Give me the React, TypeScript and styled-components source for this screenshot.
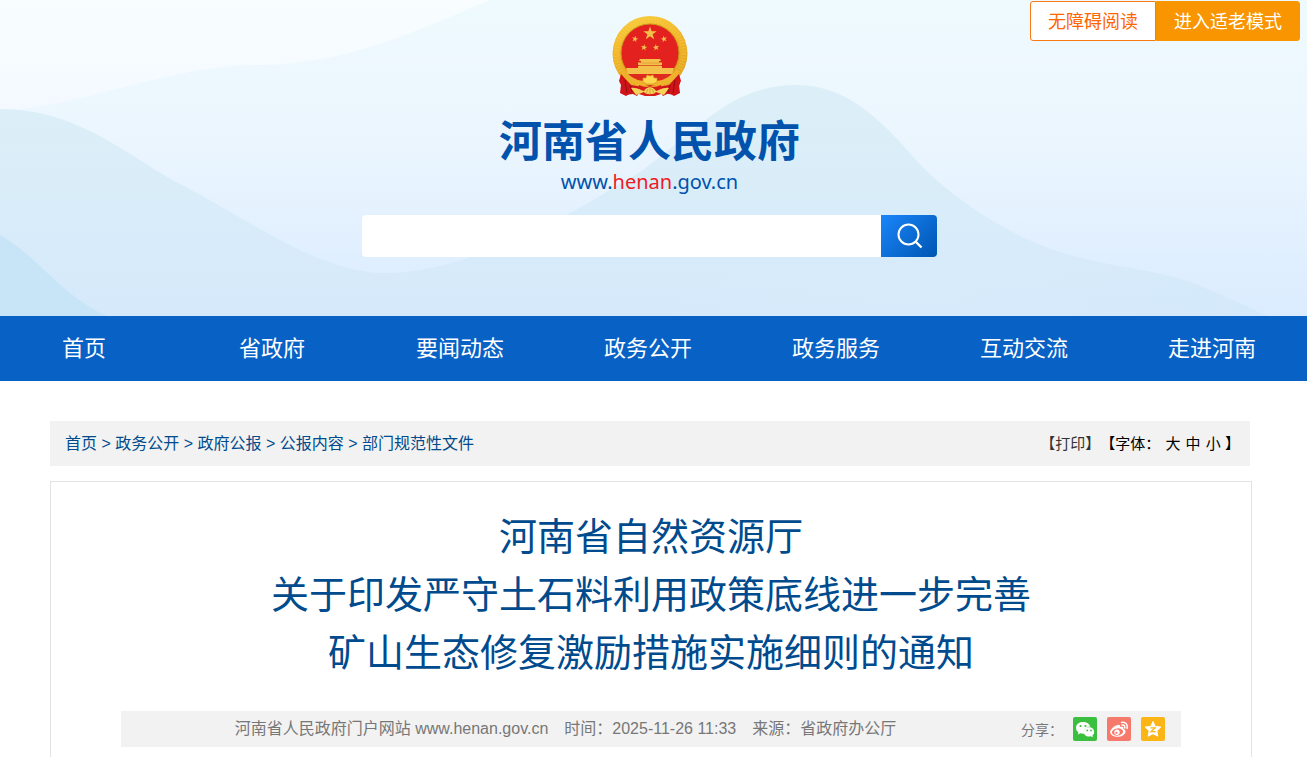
import React from "react";
import styled, { createGlobalStyle } from "styled-components";

const GlobalStyle = createGlobalStyle`
  * { box-sizing: border-box; }
  body {
    margin: 0;
    background: #fff;
    font-family: "Liberation Sans", "Noto Sans CJK SC", sans-serif;
    text-spacing-trim: space-all;
  }
  a { color: inherit; text-decoration: none; }
  button, input { font: inherit; border: 0; margin: 0; }
`;

const Page = styled.div`
  display: flex;
  flex-direction: column;
  min-height: 100vh;
`;

const Header = styled.header`
  position: relative;
  padding: 15px 8px 59px 0;
  display: flex;
  flex-direction: column;
  align-items: center;
  overflow: hidden;
  background: #f8fdff;
`;

const Waves = styled.svg`
  position: absolute;
  inset: 0;
  width: 100%;
  height: 100%;
`;

const TopTools = styled.div`
  position: absolute;
  top: 1px;
  right: 7px;
  display: flex;
`;

const ToolButton = styled.button<{ $solid?: boolean }>`
  height: 40px;
  width: ${(p) => (p.$solid ? 144 : 126)}px;
  padding: 0 0 2px;
  font-size: 18px;
  cursor: pointer;
  color: ${(p) => (p.$solid ? "#fff" : "#f60")};
  background: ${(p) => (p.$solid ? "#f99500" : "#fff")};
  border: 1px solid ${(p) => (p.$solid ? "#f99500" : "#f97a14")};
  border-radius: ${(p) => (p.$solid ? "0 3px 3px 0" : "3px 0 0 3px")};
`;

const Brand = styled.a`
  position: relative;
  display: flex;
  flex-direction: column;
  align-items: center;
`;

const SiteName = styled.span`
  margin-top: 9px;
  font-family: "Noto Sans CJK SC", sans-serif;
  font-size: 43px;
  font-weight: 700;
  line-height: 60px;
  color: #0052ad;
`;

const SiteUrl = styled.span`
  font-family: "Noto Sans", sans-serif;
  font-size: 20px;
  line-height: 28px;
  color: #0052ad;
  em { font-style: normal; color: #ee1b22; }
`;

const SearchForm = styled.form`
  position: relative;
  display: flex;
  width: 575px;
  max-width: 100%;
  height: 42px;
  margin-top: 19px;
`;

const SearchInput = styled.input`
  flex: 1;
  min-width: 0;
  padding: 0 15px;
  font-size: 16px;
  background: #fff;
  border-radius: 4px 0 0 4px;
`;

const SearchButton = styled.button`
  display: flex;
  align-items: center;
  justify-content: center;
  width: 56px;
  padding: 0;
  cursor: pointer;
  background: linear-gradient(135deg, #1a86fa, #0055b2);
  border-radius: 0 4px 4px 0;
`;

const NavBar = styled.nav`
  background: #0861c5;
  overflow: hidden;
`;

const NavList = styled.ul`
  display: grid;
  grid-template-columns: repeat(7, 1fr);
  margin: 0 1px 0 -10px;
  padding: 0;
  list-style: none;
`;

const NavItem = styled.li`
  text-align: center;
  font-size: 22px;
  line-height: 65px;
  color: #fff;
`;

const Main = styled.main`
  flex: 1;
  display: flex;
  padding: 40px 7px 0 0;
`;

const Container = styled.div`
  flex: 1;
  display: flex;
  flex-direction: column;
  max-width: 1200px;
  margin: 0 auto;
`;

const CrumbBar = styled.div`
  display: flex;
  justify-content: space-between;
  align-items: center;
  height: 45px;
  padding: 0 10px 0 15px;
  background: #f2f2f2;
`;

const Crumbs = styled.nav`
  font-size: 16px;
  line-height: 24px;
  color: #004b8d;
`;

const PageTools = styled.div`
  font-size: 15px;
  line-height: 24px;
  color: #000;
`;

const PrintLink = styled.a`
  color: #333;
`;

const SizeLink = styled.a`
  margin-left: 1px;
`;

const Article = styled.article`
  box-sizing: content-box;
  flex: 1;
  width: 100%;
  margin-top: 15px;
  padding-top: 26px;
  border: solid #e3e3e3;
  border-width: 1px 1px 0;
`;

const Title = styled.h1`
  margin: 0;
  text-align: center;
  font-size: 38px;
  font-weight: 400;
  line-height: 58px;
  color: #004b8d;
`;

const MetaBar = styled.div`
  display: flex;
  align-items: center;
  min-height: 36px;
  margin: 29px 70px 10px;
  background: #f2f2f2;
  color: #777;
`;

const Meta = styled.div`
  flex: 1;
  display: flex;
  justify-content: center;
  gap: 16px;
  font-size: 16px;
  line-height: 24px;
`;

const Share = styled.div`
  display: flex;
  align-items: center;
  gap: 10px;
  padding: 0 16px 0 11px;
  font-size: 14px;
`;

const ShareButton = styled.button<{ $color: string }>`
  display: flex;
  width: 24px;
  height: 24px;
  padding: 0;
  cursor: pointer;
  background: ${(p) => p.$color};
  border-radius: 2px;
`;

const NAV = ["首页", "省政府", "要闻动态", "政务公开", "政务服务", "互动交流", "走进河南"];
const CRUMBS = ["首页", "政务公开", "政府公报", "公报内容", "部门规范性文件"];
const SIZES = ["大", "中", "小"];
const TITLE = [
  "河南省自然资源厅",
  "关于印发严守土石料利用政策底线进一步完善",
  "矿山生态修复激励措施实施细则的通知",
];

const star = (cx: number, cy: number, r: number, turn = 0) =>
  Array.from({ length: 10 }, (_, i) => {
    const a = ((i * 36 - 90 + turn) * Math.PI) / 180;
    const d = i % 2 ? r * 0.4 : r;
    return `${(cx + d * Math.cos(a)).toFixed(2)},${(cy + d * Math.sin(a)).toFixed(2)}`;
  }).join(" ");

const Background = () => (
  <Waves viewBox="0 0 1307 316" preserveAspectRatio="none" aria-hidden="true">
    <defs>
      <linearGradient id="sky" x1="0" y1="0" x2="0" y2="1">
        <stop offset="0" stopColor="#f8feff" />
        <stop offset="0.34" stopColor="#f3f9ff" />
      </linearGradient>
      <linearGradient id="far" x1="0" y1="0" x2="0" y2="1">
        <stop offset="0" stopColor="#effafe" />
        <stop offset="0.4" stopColor="#ecf6fe" />
        <stop offset="1" stopColor="#dbecff" />
      </linearGradient>
      <linearGradient id="mid" x1="0" y1="0.1" x2="0" y2="1">
        <stop offset="0" stopColor="#dceff8" />
        <stop offset="0.5" stopColor="#d8ecf9" />
        <stop offset="1" stopColor="#d5e9fb" />
      </linearGradient>
      <linearGradient id="fade" x1="0" y1="0" x2="1" y2="0">
        <stop offset="0" stopColor="#dff0fd" stopOpacity="0" />
        <stop offset="1" stopColor="#d2e8f9" />
      </linearGradient>
    </defs>
    <rect width="1307" height="316" fill="url(#sky)" />
    <path d="M0 112C100 102 170 65 260 65C340 65 400 38 490 0H1307V316H0Z" fill="url(#far)" />
    <path
      d="M0 109C80 109 130 158 180 184C260 226 320 273 385 273C470 273 570 215 640 172C700 129 730 85 797 85C850 85 885 125 915 159C950 198 1010 236 1060 252C1110 268 1160 269 1200 286C1230 298 1250 308 1268 316H0Z"
      fill="url(#mid)"
    />
    <path d="M640 316C760 250 850 260 960 273C1050 284 1120 255 1200 286C1230 298 1250 308 1268 316Z" fill="url(#fade)" opacity="0.5" />
    <path d="M0 235C40 258 60 295 107 316H0Z" fill="#c8e5f8" />
  </Waves>
);

const Emblem = () => (
  <svg width="78" height="84" viewBox="0 0 78 84" aria-hidden="true">
    <defs>
      <linearGradient id="gold" x1="0" y1="0" x2="0.3" y2="1">
        <stop offset="0" stopColor="#f9cf3c" />
        <stop offset="0.5" stopColor="#f0b429" />
        <stop offset="1" stopColor="#e2a21f" />
      </linearGradient>
    </defs>
    <path d="M12 54L10 68L14 80L29 78L39 81L50 78L65 80L69 68L67 54Z" fill="#c41418" />
    <circle cx="39" cy="38.500" r="37.500" fill="url(#gold)" />
    <circle cx="39" cy="38.500" r="33.500" fill="none" stroke="#ffe068" strokeWidth="5" strokeDasharray="1 2" opacity="0.35" />
    <circle cx="39" cy="38" r="29" fill="#e3221f" stroke="#ca961c" />
    <g fill="#f3c04a">
      <polygon points={star(39, 18.5, 7)} />
      <polygon points={star(24, 24, 3.4, 15)} />
      <polygon points={star(53, 24, 3.4, -15)} />
      <polygon points={star(33, 32.500, 3.4, 8)} />
      <polygon points={star(45, 32.500, 3.4, -8)} />
      <path d="M29 44H49L50 46H48V47.500H51V50H27V47.500H30V46H28Z" />
      <path d="M27 51H51V53H63L61 59H17L15 53H27Z" />
    </g>
    <path d="M30 48H48M28 50.500H50" stroke="#d98a28" strokeWidth="0.600" />
    <path d="M14 59H64L58 65L39 72L20 65Z" fill="#df2a20" />
    <path d="M12 54C20 63 30 69 39 64C48 69 58 63 66 54L69 60C60 70 48 72 39 70C30 72 18 70 9 60Z" fill="#efb22c" />
    <path d="M32 67L32 63L35 63L36 60L39 61L42 60L43 63L46 63L46 67L42 69H36Z" fill="#ffd84d" stroke="#d7951f" strokeWidth="0.700" />
    <path d="M10 59L8 66L10 70L9 78L15 81L20 78L26 81L32 72L20 70Z" fill="#cf1519" />
    <path d="M68 59L70 66L68 70L69 78L63 81L58 78L52 81L46 72L58 70Z" fill="#cf1519" />
    <path d="M14 65L16 78M19 70L21 77M64 65L62 78M59 70L57 77" stroke="#970b10" />
    <path d="M28 70C34 73 44 73 50 70L50 79L44 81H34L28 79Z" fill="#d81b1b" />
    <path d="M20 73C26 72 31 76 33 76C36 71 42 71 45 76C47 76 52 72 58 73L53 80L45 77C43 80 35 80 33 77L25 80Z" fill="#f5d35a" />
    <path d="M35 78L37 74M39 79V73M43 78L41 74" stroke="#c98b1c" strokeWidth="0.700" />
  </svg>
);

const SearchIcon = () => (
  <svg width="28" height="28" viewBox="0 0 28 28" fill="none" stroke="#fff" strokeWidth="2" aria-hidden="true">
    <circle cx="13.500" cy="12.500" r="10" />
    <path d="M20.500 19.500L26.500 25.500" strokeWidth="2.400" />
  </svg>
);

const WechatIcon = () => (
  <svg width="24" height="24" viewBox="0 0 24 24" aria-hidden="true">
    <path d="M10 5C5.800 5 3 7.600 3 10.900C3 12.700 4 14.200 5.400 15.300L4.900 17.600L7.500 16.300C8.300 16.600 9.300 16.700 10.200 16.700H11C10.300 12.500 13.600 9.600 17.300 9.600C16.600 6.900 13.700 5 10 5Z" fill="#fff" />
    <path d="M16 10.300C12.700 10.300 10.700 12.400 10.700 14.900C10.700 17.500 13 19.500 16 19.500L17.700 19.300L19.900 20.300L19.400 18.500C20.500 17.600 21.200 16.400 21.200 14.900C21.200 12.300 18.900 10.300 16 10.300Z" fill="#fff" />
    <g fill="#3bbf3e">
      <circle cx="7.600" cy="9" r="1.100" />
      <circle cx="12.400" cy="9" r="1.100" />
      <circle cx="14.300" cy="13.400" r="0.900" />
      <circle cx="18" cy="13.400" r="0.900" />
    </g>
  </svg>
);

const WeiboIcon = () => (
  <svg width="24" height="24" viewBox="0 0 24 24" aria-hidden="true">
    <path d="M10.700 8C12.300 7.200 13.700 7.900 13.100 10.100C15.400 9.300 17 9.900 16.300 12C18 12.500 18.800 13.500 18.500 14.900C17.900 17.900 14.300 19.800 10.400 19.800C6.500 19.800 3.200 18 3.200 15C3.200 12.500 6.800 8.900 10.700 8Z" fill="#fff" />
    <ellipse cx="10.500" cy="15" rx="5.600" ry="3.600" fill="#f67a6b" transform="rotate(-8 10.500 15)" />
    <circle cx="10" cy="15.200" r="2.700" fill="#fff" />
    <circle cx="9.400" cy="15.800" r="1.100" fill="#f67a6b" />
    <path d="M14.500 5.400C18.500 4.600 21.300 7.600 20 11.400M15.100 8.100C17.100 7.700 18.300 9 17.700 10.900" fill="none" stroke="#fff" strokeWidth="1.500" strokeLinecap="round" />
  </svg>
);

const QzoneIcon = () => (
  <svg width="24" height="24" viewBox="0 0 24 24" aria-hidden="true">
    <path d="M12 4.500L14.200 9.400L19.800 10L15.800 13.900L16.800 19.200L12 16.700L7.200 19.200L8.200 13.900L4.200 10L9.800 9.400Z" fill="#fff" stroke="#fff" strokeLinejoin="round" />
    <path d="M9.500 10.800H14.200L10 14.600H14.700" fill="none" stroke="#fbb517" strokeWidth="1.200" />
  </svg>
);

export default function App() {
  return (
    <Page>
      <GlobalStyle />
      <Header>
        <Background />
        <Brand href="#">
          <Emblem />
          <SiteName>河南省人民政府</SiteName>
          <SiteUrl>
            www.<em>henan</em>.gov.cn
          </SiteUrl>
        </Brand>
        <SearchForm role="search" onSubmit={(e) => e.preventDefault()}>
          <SearchInput type="text" aria-label="搜索" />
          <SearchButton type="submit" aria-label="搜索">
            <SearchIcon />
          </SearchButton>
        </SearchForm>
        <TopTools>
          <ToolButton type="button">无障碍阅读</ToolButton>
          <ToolButton type="button" $solid>进入适老模式</ToolButton>
        </TopTools>
      </Header>
      <NavBar>
        <NavList>
          {NAV.map((label) => (
            <NavItem key={label}>
              <a href="#">{label}</a>
            </NavItem>
          ))}
        </NavList>
      </NavBar>
      <Main>
        <Container>
          <CrumbBar>
            <Crumbs>
              {CRUMBS.map((label, i) => (
                <React.Fragment key={label}>
                  {i > 0 && " > "}
                  <a href="#">{label}</a>
                </React.Fragment>
              ))}
            </Crumbs>
            <PageTools>
              <PrintLink href="#">【打印】</PrintLink>【字体：{" "}
              {SIZES.map((size) => (
                <React.Fragment key={size}>
                  <SizeLink href="#">{size}</SizeLink>{" "}
                </React.Fragment>
              ))}
              】
            </PageTools>
          </CrumbBar>
          <Article>
            <Title>
              {TITLE.map((line, i) => (
                <React.Fragment key={line}>
                  {i > 0 && <br />}
                  {line}
                </React.Fragment>
              ))}
            </Title>
            <MetaBar>
              <Meta>
                <span>河南省人民政府门户网站 www.henan.gov.cn</span>
                <span>时间：2025-11-26 11:33</span>
                <span>来源：省政府办公厅</span>
              </Meta>
              <Share>
                <span>分享：</span>
                <ShareButton type="button" $color="#3bbf3e" aria-label="微信">
                  <WechatIcon />
                </ShareButton>
                <ShareButton type="button" $color="#f67a6b" aria-label="微博">
                  <WeiboIcon />
                </ShareButton>
                <ShareButton type="button" $color="#fbb517" aria-label="QQ空间">
                  <QzoneIcon />
                </ShareButton>
              </Share>
            </MetaBar>
          </Article>
        </Container>
      </Main>
    </Page>
  );
}
